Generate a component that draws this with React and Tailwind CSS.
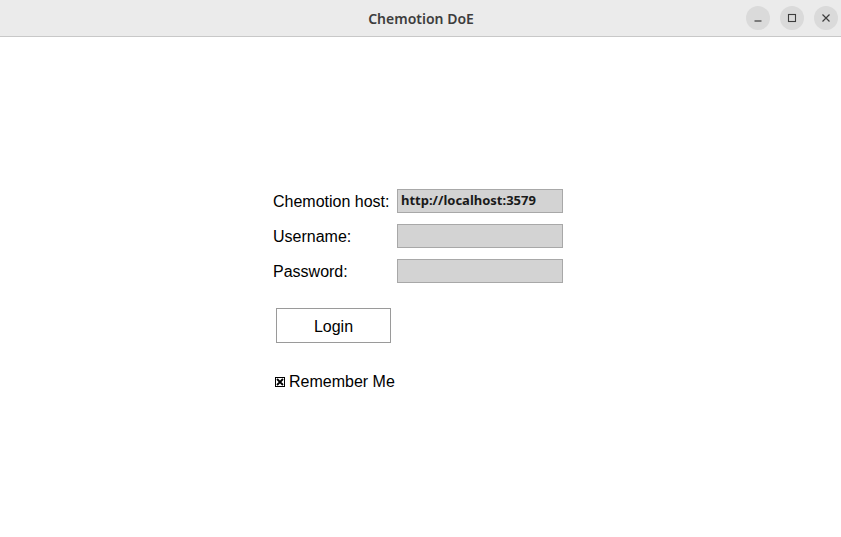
import React, { useState } from 'react';

const WinButton = ({ children }) => (
  <div className="w-6 h-6 rounded-full bg-[#dadada] flex items-center justify-center text-[#3d3d3d]">
    {children}
  </div>
);

const Field = ({ label, value }) => (
  <div className="flex items-center h-6">
    <span className="w-[124px] text-[16px] text-black pt-[2px]">{label}</span>
    <div className="w-[166px] h-6 bg-[#d3d3d3] border border-[#a8a8a8] flex items-center px-[3px] text-[13px] font-bold text-[#1a1a1a] font-['Noto_Sans',sans-serif]">
      {value}
    </div>
  </div>
);

const App = () => {
  const [remember, setRemember] = useState(true);

  return (
    <div className="w-[841px] h-[537px] bg-white flex flex-col font-['Liberation_Sans',Arial,sans-serif]">
      {/* Title bar */}
      <div className="h-[37px] shrink-0 bg-[#ebebeb] border-b border-[#c8c8c8] flex items-center relative">
        <div className="flex-1 text-center text-[14px] font-semibold text-[#3d3d3d] font-['Noto_Sans',sans-serif] pl-[1px]">
          Chemotion DoE
        </div>
        <div className="absolute right-[3px] top-[6px] flex gap-[10px]">
          <WinButton>
            <svg width="12" height="12" viewBox="0 0 12 12"><path d="M2.5 9h7" stroke="currentColor" strokeWidth="1.2" /></svg>
          </WinButton>
          <WinButton>
            <svg width="12" height="12" viewBox="0 0 12 12"><rect x="2.5" y="2.5" width="7" height="7" fill="none" stroke="currentColor" strokeWidth="1.1" /></svg>
          </WinButton>
          <WinButton>
            <svg width="12" height="12" viewBox="0 0 12 12"><path d="M2.5 2.5l7 7M9.5 2.5l-7 7" stroke="currentColor" strokeWidth="1.2" /></svg>
          </WinButton>
        </div>
      </div>

      {/* Content */}
      <div className="flex-1 pl-[273px] pt-[152px]">
        <div className="flex flex-col gap-[11px]">
          <Field label="Chemotion host:" value="http://localhost:3579" />
          <Field label="Username:" value="" />
          <Field label="Password:" value="" />
        </div>
        <button className="mt-[25px] ml-[3px] w-[115px] h-[35px] pt-[2px] bg-white border border-[#9a9a9a] text-[16px] text-black flex items-center justify-center">
          Login
        </button>
        <label className="mt-[27px] ml-[2px] flex items-center gap-[4px] text-[16px] text-black cursor-pointer" onClick={() => setRemember(!remember)}>
          <span className="w-[10px] h-[10px] border border-black flex items-center justify-center bg-white">
            {remember && (
              <svg width="8" height="8" viewBox="0 0 8 8"><path d="M1 1l6 6M7 1L1 7" stroke="black" strokeWidth="1.8" /></svg>
            )}
          </span>
          <span>Remember Me</span>
        </label>
      </div>
    </div>
  );
};

export default App;
